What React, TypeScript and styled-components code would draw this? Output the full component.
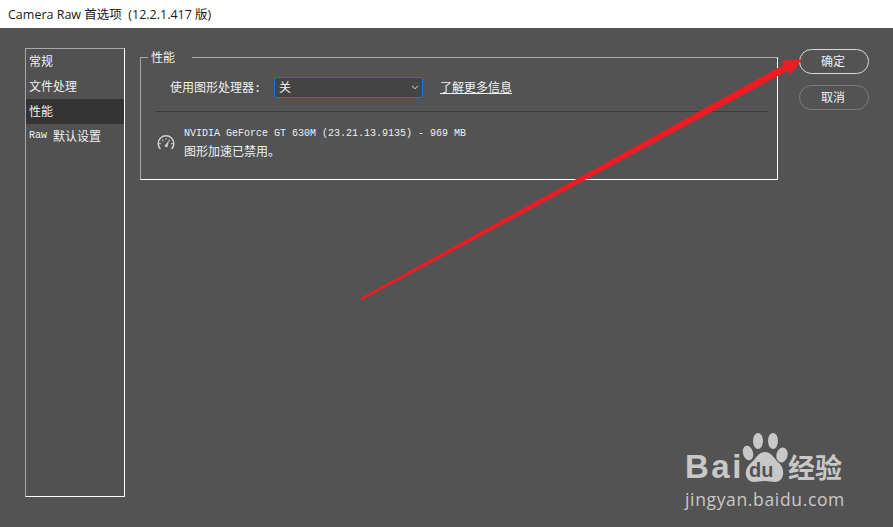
import { createGlobalStyle, styled } from 'styled-components'

const GlobalStyle = createGlobalStyle`
  html, body {
    margin: 0;
    padding: 0;
    background: #535353;
  }
  * {
    box-sizing: border-box;
  }
`

const UI_FONT = `"Noto Sans CJK SC", sans-serif`
const MONO_FONT = `"Liberation Mono", "Noto Sans CJK SC", monospace`

const Window = styled.div`
  position: relative;
  width: 893px;
  height: 527px;
  overflow: hidden;
  background: #535353;
  color: #f0f0f0;
  font-family: ${UI_FONT};
  font-size: 12px;
`

const TitleBar = styled.div`
  height: 28px;
  padding: 0 0 2px 8px;
  display: flex;
  align-items: center;
  background: #fff;
  color: #1a1a1a;
  font-family: "Open Sans", "Noto Sans CJK SC", sans-serif;
  font-size: 12.5px;
  white-space: pre;
`

const Body = styled.div`
  display: flex;
  align-items: flex-start;
  padding: 20px 0 0 25px;
`

const Sidebar = styled.nav`
  width: 100px;
  height: 449px;
  flex: none;
  margin-right: 15px;
  display: flex;
  flex-direction: column;
  background: #515151;
  border: 1px solid #fff;
  border-left-color: #a8a8a8;
  border-top-color: #a8a8a8;
`

const NavItem = styled.div<{ $active?: boolean }>`
  height: 25px;
  flex: none;
  padding: 0 0 2px 3px;
  display: flex;
  align-items: center;
  background: ${(p) => (p.$active ? '#333333' : 'transparent')};
  font-size: 12px;
  white-space: pre;
`

const NavLatin = styled.span`
  margin-right: 6px;
  font-family: ${MONO_FONT};
  font-size: 10px;
`

const Group = styled.fieldset`
  width: 638px;
  height: 131px;
  flex: none;
  margin: 1px 21px 0 0;
  padding: 0;
  min-width: 0;
  border: 1px solid #fff;
  border-left-color: #a8a8a8;
  border-top-color: #a8a8a8;
`

const GroupTitle = styled.legend`
  margin-left: 7px;
  padding: 0 17px 0 3px;
  height: 16px;
  line-height: 16px;
  font-size: 12px;
`

const SettingRow = styled.div`
  display: flex;
  align-items: center;
  height: 21px;
  margin-top: 12px;
  padding-left: 29px;
`

const FieldLabel = styled.label`
  width: 104px;
  flex: none;
  padding-bottom: 2px;
  font-family: ${MONO_FONT};
  white-space: nowrap;
`

const SelectBox = styled.div`
  width: 149px;
  height: 21px;
  flex: none;
  padding: 0 3px 0 4px;
  display: flex;
  align-items: center;
  justify-content: space-between;
  background: #444444;
  border: 1px solid #1473e6;
  border-radius: 2px;
`

const SelectValue = styled.span`
  padding-bottom: 2px;
`

const MoreLink = styled.a`
  margin: 0 0 2px 17px;
  color: #f4f4f4;
  text-decoration: underline;
  text-underline-offset: 1px;
`

const Divider = styled.hr`
  height: 1px;
  margin: 13px 9px 0 14px;
  border: 0;
  background: #3c3c3c;
`

const InfoRow = styled.div`
  display: flex;
  align-items: center;
  margin-top: 14px;
  padding-left: 16px;
`

const GaugeIcon = styled.svg`
  width: 18px;
  height: 15px;
  flex: none;
  margin: 0 9px 0 0;
`

const InfoText = styled.div`
  display: flex;
  flex-direction: column;
  gap: 1px;
`

const GpuName = styled.div`
  height: 16px;
  line-height: 16px;
  font-family: ${MONO_FONT};
  font-size: 10px;
  white-space: pre;
`

const GpuStatus = styled.div`
  height: 16px;
  line-height: 16px;
  font-size: 12px;
`

const Actions = styled.div`
  display: flex;
  flex-direction: column;
  gap: 11px;
  margin-top: 1px;
`

const PillButton = styled.button<{ $primary?: boolean }>`
  width: 70px;
  height: 25px;
  padding: 0 2px 2px 0;
  background: transparent;
  border: 1px solid ${(p) => (p.$primary ? '#d8d8d8' : '#7c7c7c')};
  border-radius: 12.5px;
  color: #f0f0f0;
  font-family: ${UI_FONT};
  font-size: 12px;
`

const ArrowOverlay = styled.svg`
  position: absolute;
  left: 0;
  top: 0;
  width: 893px;
  height: 527px;
  pointer-events: none;
`

const Watermark = styled.div`
  position: absolute;
  left: 685px;
  top: 432px;
  width: 170px;
  color: #c8c8c8;
`

const LogoRow = styled.div`
  display: flex;
  align-items: flex-end;
  height: 50px;
`

const LogoLatin = styled.span`
  width: 57px;
  flex: none;
  font-family: "Liberation Sans", sans-serif;
  font-size: 33px;
  font-weight: 700;
  line-height: 30px;
  letter-spacing: 2.5px;
`

const Paw = styled.div`
  position: relative;
  width: 46px;
  height: 50px;
  flex: none;
`

const PawDu = styled.span`
  position: absolute;
  left: 7px;
  top: 27px;
  color: #535353;
  font-family: "Liberation Sans", sans-serif;
  font-size: 20px;
  font-weight: 700;
  line-height: 22px;
`

const LogoCjk = styled.span`
  font-family: "Noto Sans CJK SC", sans-serif;
  font-size: 27px;
  font-weight: 700;
  line-height: 30px;
`

const LogoDomain = styled.div`
  margin-top: 5px;
  font-family: "Open Sans", sans-serif;
  font-size: 17.5px;
  line-height: 24px;
  letter-spacing: 0.65px;
  white-space: nowrap;
`

function Gauge() {
  return (
    <GaugeIcon viewBox="0 0 18 15" fill="none" stroke="#d0d0d0">
      <path d="M3.4 14A7.8 7.8 0 1 1 14.6 14" strokeWidth="1.5" />
      <path d="M9 3.2v1.6M3.8 8.6H2.2M15.8 8.6h-1.6M5.2 5l1 1M12.8 5l-1 1" strokeWidth="1.1" />
      <path d="M7.8 11l3.6-4.4-1.4 5.4z" fill="#d0d0d0" strokeWidth="0.8" />
    </GaugeIcon>
  )
}

function Chevron() {
  return (
    <svg width="8" height="5" viewBox="0 0 8 5" fill="none" stroke="#b4b4b4" strokeWidth="1.1">
      <path d="M1 0.8l3 3 3-3" />
    </svg>
  )
}

export default function App() {
  return (
    <Window>
      <GlobalStyle />
      <TitleBar>{'Camera Raw 首选项  (12.2.1.417 版)'}</TitleBar>
      <Body>
        <Sidebar>
          <NavItem>常规</NavItem>
          <NavItem>文件处理</NavItem>
          <NavItem $active>性能</NavItem>
          <NavItem>
            <NavLatin>Raw</NavLatin>默认设置
          </NavItem>
        </Sidebar>
        <Group>
          <GroupTitle>性能</GroupTitle>
          <SettingRow>
            <FieldLabel>使用图形处理器:</FieldLabel>
            <SelectBox>
              <SelectValue>关</SelectValue>
              <Chevron />
            </SelectBox>
            <MoreLink>了解更多信息</MoreLink>
          </SettingRow>
          <Divider />
          <InfoRow>
            <Gauge />
            <InfoText>
              <GpuName>NVIDIA GeForce GT 630M (23.21.13.9135) - 969 MB</GpuName>
              <GpuStatus>图形加速已禁用。</GpuStatus>
            </InfoText>
          </InfoRow>
        </Group>
        <Actions>
          <PillButton $primary>确定</PillButton>
          <PillButton>取消</PillButton>
        </Actions>
      </Body>
      <ArrowOverlay viewBox="0 0 893 527">
        <path
          d="M360.5 298L784 64.5L781.7 60.7L802 59.3L790 75L788 70.6L362 300Z"
          fill="#ed1c24"
        />
      </ArrowOverlay>
      <Watermark>
        <LogoRow>
          <LogoLatin>Bai</LogoLatin>
          <Paw>
            <svg width="46" height="50" viewBox="0 0 46 50" fill="#c8c8c8">
              <ellipse cx="16" cy="9" rx="5" ry="8" />
              <ellipse cx="31" cy="9" rx="5" ry="8" />
              <ellipse cx="6" cy="21" rx="5" ry="7.5" transform="rotate(-15 6 21)" />
              <ellipse cx="40" cy="23" rx="5.5" ry="7.5" transform="rotate(15 40 23)" />
              <path d="M23 20C30 20 32 27 37 31C44 37 42 50 33 50C29 50 27 49 23 49C19 49 16 50 12 50C3 50 1 38 8 32C14 27 16 20 23 20Z" />
            </svg>
            <PawDu>du</PawDu>
          </Paw>
          <LogoCjk>经验</LogoCjk>
        </LogoRow>
        <LogoDomain>jingyan.baidu.com</LogoDomain>
      </Watermark>
    </Window>
  )
}
